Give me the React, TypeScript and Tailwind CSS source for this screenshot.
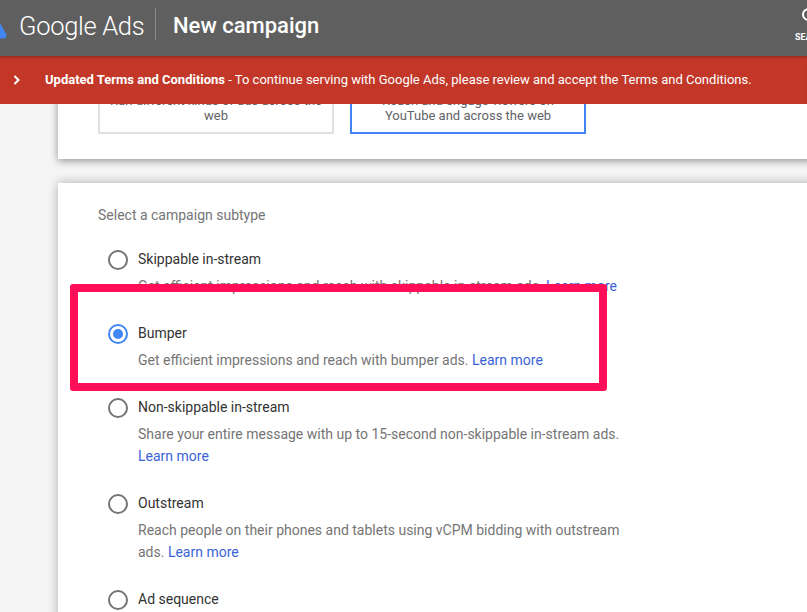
import React from "react";

function Radio({ checked = false }: { checked?: boolean }) {
  return (
    <span
      className={
        "flex h-5 w-5 shrink-0 items-center justify-center rounded-full border-2 " +
        (checked ? "border-[#4285f4]" : "border-[#757575]")
      }
    >
      {checked && <span className="h-[10px] w-[10px] rounded-full bg-[#4285f4]" />}
    </span>
  );
}

function Option({
  title,
  checked,
  children,
}: {
  title: string;
  checked?: boolean;
  children?: React.ReactNode;
}) {
  return (
    <div className="flex gap-[10px] pl-[50px] mb-[25px]">
      <div className="h-[22px] flex items-center pt-[1px]">
        <Radio checked={checked} />
      </div>
      <div className="w-[490px]">
        <div className="h-[22px] leading-[22px] text-[#333333]">{title}</div>
        {children && <div className="mt-[5px] leading-[22px] text-[#757575]">{children}</div>}
      </div>
    </div>
  );
}

function Learn() {
  return <span className="text-[#3b63d8]">Learn more</span>;
}

export default function App() {
  return (
    <div className="relative h-[612px] w-[807px] overflow-hidden bg-[#f5f5f5] font-['Roboto',sans-serif] text-[14px]">
      <header className="relative z-20 flex h-[56px] items-center bg-[#5f5f5f] pb-[4px] text-white">
        <svg width="7" height="16" viewBox="0 0 7 16" className="mt-[9px] shrink-0">
          <path d="M0 0 L5.5 10 A3.2 3.2 0 0 1 3 15.5 L0 15.5 Z" fill="#4285f4" />
        </svg>
        <div className="ml-[12px] w-[136px] text-[25.5px] font-light leading-[32px] tracking-[-0.3px] whitespace-nowrap">
          Google Ads
        </div>
        <div className="-mt-[4px] h-[32px] w-px bg-[#8a8a8a]" />
        <div className="ml-[17px] text-[22px] font-medium leading-[28px] whitespace-nowrap">New campaign</div>
        <div className="ml-auto -mb-[4px] flex h-[56px] w-[12px] flex-col items-start overflow-hidden pt-[8px]">
          <span className="ml-[7px] block h-[13px] w-[13px] shrink-0 rounded-full border-2 border-white" />
          <span className="mt-[11px] text-[9px] font-bold leading-[10px] whitespace-nowrap">SEARCH</span>
        </div>
      </header>

      <div className="relative z-20 flex h-[48px] items-center bg-[#c23728] text-[13px] text-white shadow-[inset_0_3px_3px_-2px_rgba(0,0,0,0.3)]">
        <svg width="10" height="12" viewBox="0 0 10 12" className="ml-[12px] shrink-0" fill="none" stroke="white" strokeWidth="2">
          <path d="M2.5 2 L6.5 6 L2.5 10" />
        </svg>
        <div className="ml-[23px] whitespace-nowrap">
          <span className="font-bold">Updated Terms and Conditions</span>
          <span> - To continue serving with Google Ads, please review and accept the Terms and Conditions.</span>
        </div>
      </div>

      <main className="pl-[58px] w-[900px]">
        <section className="relative -mt-[20px] h-[75px] bg-white shadow-[0_2px_8px_rgba(0,0,0,0.4)]">
          <div className="flex gap-[16px] pl-[40px] text-center text-[13px] leading-[15px] text-[#5f6368]">
            <div className="flex h-[50px] w-[236px] items-start justify-center border-2 border-[#e0e0e0] px-[8px] pt-[7px] box-border">
              Run different kinds of ads across the web
            </div>
            <div className="flex h-[50px] w-[236px] items-start justify-center border-2 border-[#4285f4] px-[20px] pt-[7px] box-border">
              Reach and engage viewers on YouTube and across the web
            </div>
          </div>
        </section>

        <section className="mt-[24px] h-[600px] bg-white pt-[22px] shadow-[0_0_10px_rgba(0,0,0,0.3)]">
          <div className="mb-[23px] pl-[40px] leading-[20px] text-[#757575]">Select a campaign subtype</div>
          <Option title="Skippable in-stream">
            Get efficient impressions and reach with skippable in-stream ads. <Learn />
          </Option>
          <Option title="Bumper" checked>
            Get efficient impressions and reach with bumper ads. <Learn />
          </Option>
          <Option title="Non-skippable in-stream">
            Share your entire message with up to 15-second non-skippable in-stream ads. <Learn />
          </Option>
          <Option title="Outstream">
            Reach people on their phones and tablets using vCPM bidding with outstream ads. <Learn />
          </Option>
          <Option title="Ad sequence" />
        </section>
      </main>

      <div className="absolute left-[70px] top-[284px] z-10 h-[107px] w-[537px] rounded-[3px] border-[8px] border-[#ff0f57]" />
    </div>
  );
}
